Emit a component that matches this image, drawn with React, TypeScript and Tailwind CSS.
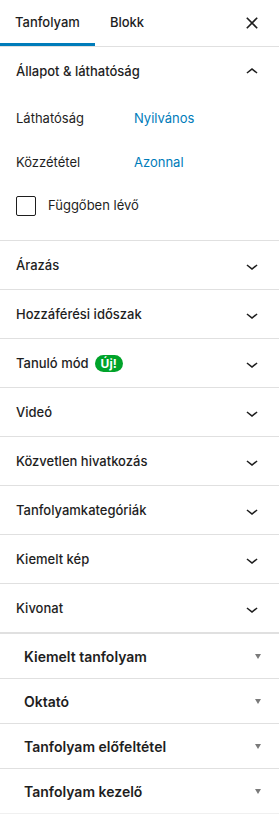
import React from "react";

const font = { fontFamily: "Inter, 'Noto Sans', sans-serif" };

function ChevronDown() {
  return (
    <svg width="24" height="24" viewBox="0 0 24 24" className="fill-[#1e1e1e]">
      <path d="M17.5 11.6L12 16l-5.5-4.4.9-1.2L12 14l4.6-3.6 1 1.2z" />
    </svg>
  );
}

function ChevronUp() {
  return (
    <svg width="24" height="24" viewBox="0 0 24 24" className="fill-[#1e1e1e]">
      <path d="M6.5 12.4L12 8l5.5 4.4-.9 1.2L12 10l-4.6 3.6-1-1.2z" />
    </svg>
  );
}

function Panel({ title, badge }: { title: string; badge?: string }) {
  return (
    <div className="border-b border-[#e0e0e0]">
      <button className="flex h-12 w-full items-center justify-between pl-4 pr-[15px] pt-[1px] text-left">
        <span className="flex items-center gap-[6px] text-[13px] font-medium text-[#1e1e1e]">
          {title}
          {badge && (
            <span className="rounded-full bg-[#00a32a] px-[6px] text-[12px] font-bold leading-[17px] text-white">
              {badge}
            </span>
          )}
        </span>
        <ChevronDown />
      </button>
    </div>
  );
}

function MetaBox({ title, last }: { title: string; last?: boolean }) {
  return (
    <div className={last ? "border-b border-[#f0f0f0]" : "border-b border-[#e0e0e0]"}>
      <div className="flex h-11 items-center justify-between pl-6 pr-[18px] pt-[1px]">
        <span className="text-[14px] font-semibold text-[#1e1e1e]">{title}</span>
        <span className="h-0 w-0 border-x-[3px] border-t-[5px] border-x-transparent border-t-[#7a7a7a]" />
      </div>
    </div>
  );
}

export default function App() {
  return (
    <div className="min-h-[828px] w-[279px] bg-white text-[#1e1e1e]" style={font}>
      {/* tabs */}
      <div className="flex h-[47px] items-stretch border-b border-[#e0e0e0]">
        <button className="relative px-[15px] text-[13px] font-medium text-[#1e1e1e]">
          Tanfolyam
          <span className="absolute inset-x-0 bottom-0 h-[3px] bg-[#007cba]" />
        </button>
        <button className="px-[15px] text-[13px] font-medium text-[#1e1e1e]">Blokk</button>
        <div className="ml-auto flex items-center pr-[15px]">
          <svg width="24" height="24" viewBox="0 0 24 24" className="stroke-[#1e1e1e]" strokeWidth="1.6">
            <path d="M6.8 6.8l10.4 10.4M17.2 6.8L6.8 17.2" />
          </svg>
        </div>
      </div>

      {/* status & visibility */}
      <div className="border-b border-[#e0e0e0] pb-3">
        <button className="flex h-[49px] w-full items-center justify-between pl-4 pr-[15px] pt-[1px] text-left">
          <span className="text-[13px] font-medium">Állapot &amp; láthatóság</span>
          <ChevronUp />
        </button>
        <div className="px-4 text-[13px]">
          <div className="flex h-11 items-center pt-[1px]">
            <span className="w-[118px]">Láthatóság</span>
            <span className="text-[#007cba]">Nyilvános</span>
          </div>
          <div className="flex h-11 items-center pt-[1px]">
            <span className="w-[118px]">Közzététel</span>
            <span className="text-[#007cba]">Azonnal</span>
          </div>
          <div className="flex h-11 items-center gap-3">
            <span className="h-5 w-5 rounded-[2px] border border-[#1e1e1e]" />
            <span>Függőben lévő</span>
          </div>
        </div>
      </div>

      <Panel title="Árazás" />
      <Panel title="Hozzáférési időszak" />
      <Panel title="Tanuló mód" badge="Új!" />
      <Panel title="Videó" />
      <Panel title="Közvetlen hivatkozás" />
      <Panel title="Tanfolyamkategóriák" />
      <Panel title="Kiemelt kép" />
      <Panel title="Kivonat" />

      <div className="border-t border-[#e0e0e0]">
        <MetaBox title="Kiemelt tanfolyam" />
        <MetaBox title="Oktató" />
        <MetaBox title="Tanfolyam előfeltétel" />
        <MetaBox title="Tanfolyam kezelő" last />
      </div>
    </div>
  );
}
